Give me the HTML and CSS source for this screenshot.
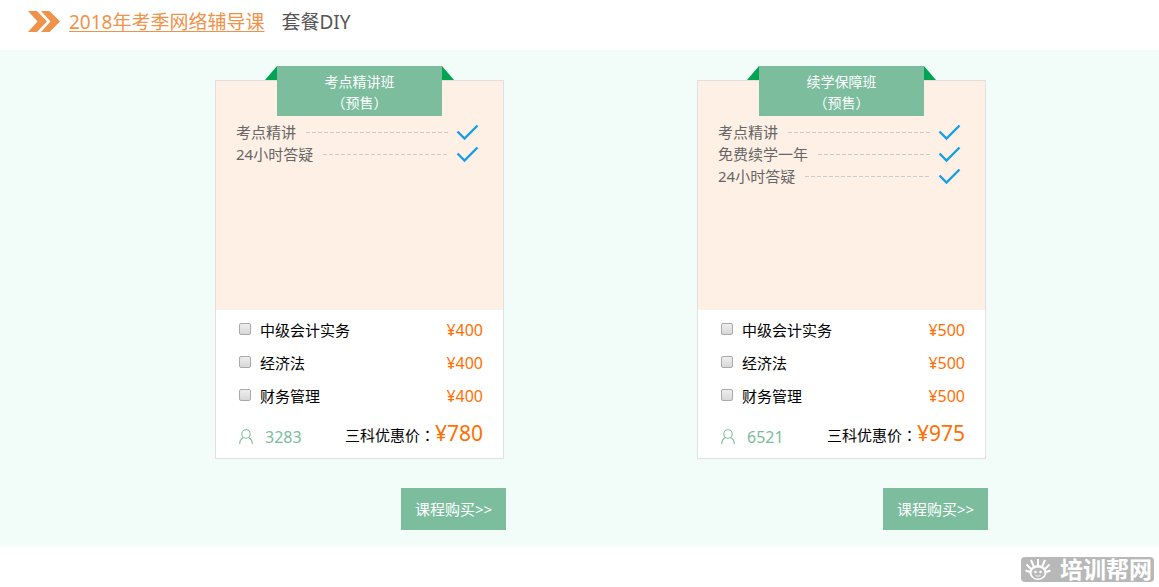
FILE: index.html
```
<!DOCTYPE html>
<html lang="zh-CN">
<head>
    <meta charset="UTF-8">
    <meta name="viewport" content="width=device-width, initial-scale=1.0">
    <title>2018年考季网络辅导课</title>
    <link rel="stylesheet" href="styles.css">
</head>
<body>
    <svg class="sprite" width="0" height="0" aria-hidden="true">
        <symbol id="check" viewBox="0 0 23 17">
            <path d="M1.5 7.5 L8.5 14.5 L21.5 1.5" fill="none" stroke="#169fe6" stroke-width="2.4"/>
        </symbol>
        <symbol id="user" viewBox="0 0 14 15">
            <circle cx="7" cy="5" r="4.2" fill="none" stroke="#7bbd9d" stroke-width="1.1"/>
            <path d="M0.7 15 C0.7 11.8 2.3 9.6 4.6 8.6 M9.4 8.6 C11.7 9.6 13.3 11.8 13.3 15" fill="none" stroke="#7bbd9d" stroke-width="1.1"/>
        </symbol>
    </svg>

    <div class="header">
        <svg class="arrows" width="32" height="21" viewBox="0 0 32 21">
            <path d="M0 0 H9 L19 10.5 L9 21 H0 L9.5 10.5 Z M13 0 H21.5 L32 10.5 L21.5 21 H13 L22.5 10.5 Z" fill="#f0934a"/>
        </svg>
        <a class="title" href="#">2018年考季网络辅导课</a>
        <span class="subtitle">套餐DIY</span>
    </div>

    <div class="courses">
        <div class="course">
            <div class="card">
                <div class="ribbon">考点精讲班<br>（预售）</div>
                <ul class="features">
                    <li>考点精讲<i></i><svg><use href="#check"/></svg></li>
                    <li>24小时答疑<i></i><svg><use href="#check"/></svg></li>
                </ul>
                <div class="subjects">
                    <label><input type="checkbox"> 中级会计实务 <span class="price">¥400</span></label>
                    <label><input type="checkbox"> 经济法 <span class="price">¥400</span></label>
                    <label><input type="checkbox"> 财务管理 <span class="price">¥400</span></label>
                </div>
                <div class="total">
                    <svg class="user"><use href="#user"/></svg>
                    <span class="count">3283</span>
                    <span class="sum">三科优惠价<span class="colon" lang="zh-TW">：</span></span><span class="big">¥780</span>
                </div>
            </div>
            <button class="buy">课程购买&gt;&gt;</button>
        </div>

        <div class="course">
            <div class="card">
                <div class="ribbon">续学保障班<br>（预售）</div>
                <ul class="features">
                    <li>考点精讲<i></i><svg><use href="#check"/></svg></li>
                    <li>免费续学一年<i></i><svg><use href="#check"/></svg></li>
                    <li>24小时答疑<i></i><svg><use href="#check"/></svg></li>
                </ul>
                <div class="subjects">
                    <label><input type="checkbox"> 中级会计实务 <span class="price">¥500</span></label>
                    <label><input type="checkbox"> 经济法 <span class="price">¥500</span></label>
                    <label><input type="checkbox"> 财务管理 <span class="price">¥500</span></label>
                </div>
                <div class="total">
                    <svg class="user"><use href="#user"/></svg>
                    <span class="count">6521</span>
                    <span class="sum">三科优惠价<span class="colon" lang="zh-TW">：</span></span><span class="big">¥975</span>
                </div>
            </div>
            <button class="buy">课程购买&gt;&gt;</button>
        </div>
    </div>

    <div class="footer">
        <div class="brand">
            <svg width="26" height="23" viewBox="0 0 26 23">
                <path d="M13 8 V1 M9 9 L6 2 M17 9 L20 2 M6 11 L1.5 6.5 M20 11 L24.5 6.5 M5 14 L0.5 12.5 M21 14 L25.5 12.5" stroke="#fff" stroke-width="2" fill="none"/>
                <ellipse cx="13" cy="14.5" rx="8.5" ry="7.5" fill="#fff"/>
                <ellipse cx="13" cy="15" rx="6.5" ry="5.5" fill="#b8b8b8"/>
                <circle cx="10.5" cy="14" r="1.3" fill="#fff"/>
                <circle cx="15.5" cy="14" r="1.3" fill="#fff"/>
                <path d="M10.5 17.5 Q13 19 15.5 17.5" stroke="#fff" stroke-width="0.8" fill="none"/>
            </svg>
            <span>培训帮网</span>
        </div>
    </div>
</body>
</html>
```
FILE: styles.css
```
* {
    box-sizing: border-box;
}

body {
    font-family: "Noto Sans", "Noto Sans CJK SC", sans-serif;
    font-size: 15px;
    color: #000;
    background: #fff;
    margin: 0;
}

.sprite {
    position: absolute;
}

.header {
    display: flex;
    align-items: center;
    height: 50px;
    padding: 0 28px 7px;
    font-size: 19px;
    line-height: 26px;
}

.title {
    margin-left: 9px;
    color: #f0934a;
    text-underline-offset: 2px;
    text-decoration-thickness: 1px;
}

.subtitle {
    margin-left: 17px;
    color: #555;
}

.courses {
    display: flex;
    flex-wrap: wrap;
    justify-content: center;
    gap: 30px 191px;
    padding: 30px 0 16px 44px;
    background: #f2fcf9;
}

.course {
    width: 291px;
}

.card {
    position: relative;
    width: 289px;
    border: 1px solid #e0e0e0;
    background: #fff;
}

.ribbon {
    position: absolute;
    top: -15px;
    left: 61px;
    width: 165px;
    height: 50px;
    padding-top: 5px;
    background: #7bbd9d;
    color: #fff;
    font-size: 14px;
    line-height: 21px;
    text-align: center;
}

.ribbon::before,
.ribbon::after {
    content: "";
    position: absolute;
    top: 0;
    border-bottom: 14px solid #00a453;
}

.ribbon::before {
    right: 100%;
    border-left: 12px solid transparent;
}

.ribbon::after {
    left: 100%;
    border-right: 12px solid transparent;
}

.features {
    min-height: 229px;
    margin: 0;
    padding: 40px 24px 0 20px;
    list-style: none;
    background: #fff0e5;
    color: #666;
}

.features li {
    display: flex;
    align-items: center;
    height: 22px;
    line-height: 22px;
}

.features i {
    flex: 1;
    height: 1px;
    margin: 0 7px 0 10px;
    background: repeating-linear-gradient(to right, #ccc 0 4px, transparent 4px 6px);
}

.features svg {
    width: 23px;
    height: 17px;
}

.subjects {
    padding: 3px 20px 1px 23px;
}

.subjects label {
    display: flex;
    align-items: center;
    height: 33px;
}

.subjects input {
    appearance: none;
    width: 12px;
    height: 12px;
    margin: 0 9px 2px 0;
    border: 1px solid #aaa;
    border-radius: 2px;
    background: linear-gradient(#eee, #d8d8d8);
}

.price {
    margin-left: auto;
    color: #ff6f00;
    font-size: 16px;
}

.total {
    display: flex;
    align-items: baseline;
    height: 45px;
    padding: 4px 20px 0 23px;
    line-height: 32px;
}

.user {
    width: 14px;
    height: 15px;
    align-self: flex-start;
    margin: 12px 12px 0 0;
}

.count {
    align-self: flex-end;
    color: #7bbd9d;
    font-size: 16px;
    line-height: 42px;
}

.sum {
    margin-left: auto;
}

.colon {
    font-family: "Noto Sans CJK TC", sans-serif;
}

.big {
    color: #ff6f00;
    font-size: 21px;
}

.buy {
    display: block;
    width: 105px;
    height: 42px;
    margin: 29px 0 0 auto;
    padding: 0 0 2px;
    border: none;
    background: #7bbd9d;
    color: #fff;
    font-family: inherit;
    font-size: 15px;
    cursor: pointer;
}

.footer {
    display: flex;
    justify-content: flex-end;
    padding: 11px 5px 5px;
}

.brand {
    display: flex;
    align-items: center;
    justify-content: space-between;
    width: 133px;
    height: 25px;
    padding: 0 2px 0 4px;
    border-radius: 4px;
    background: #b8b8b8;
    color: #fff;
    font-size: 23px;
    font-weight: bold;
    line-height: 25px;
}
```
